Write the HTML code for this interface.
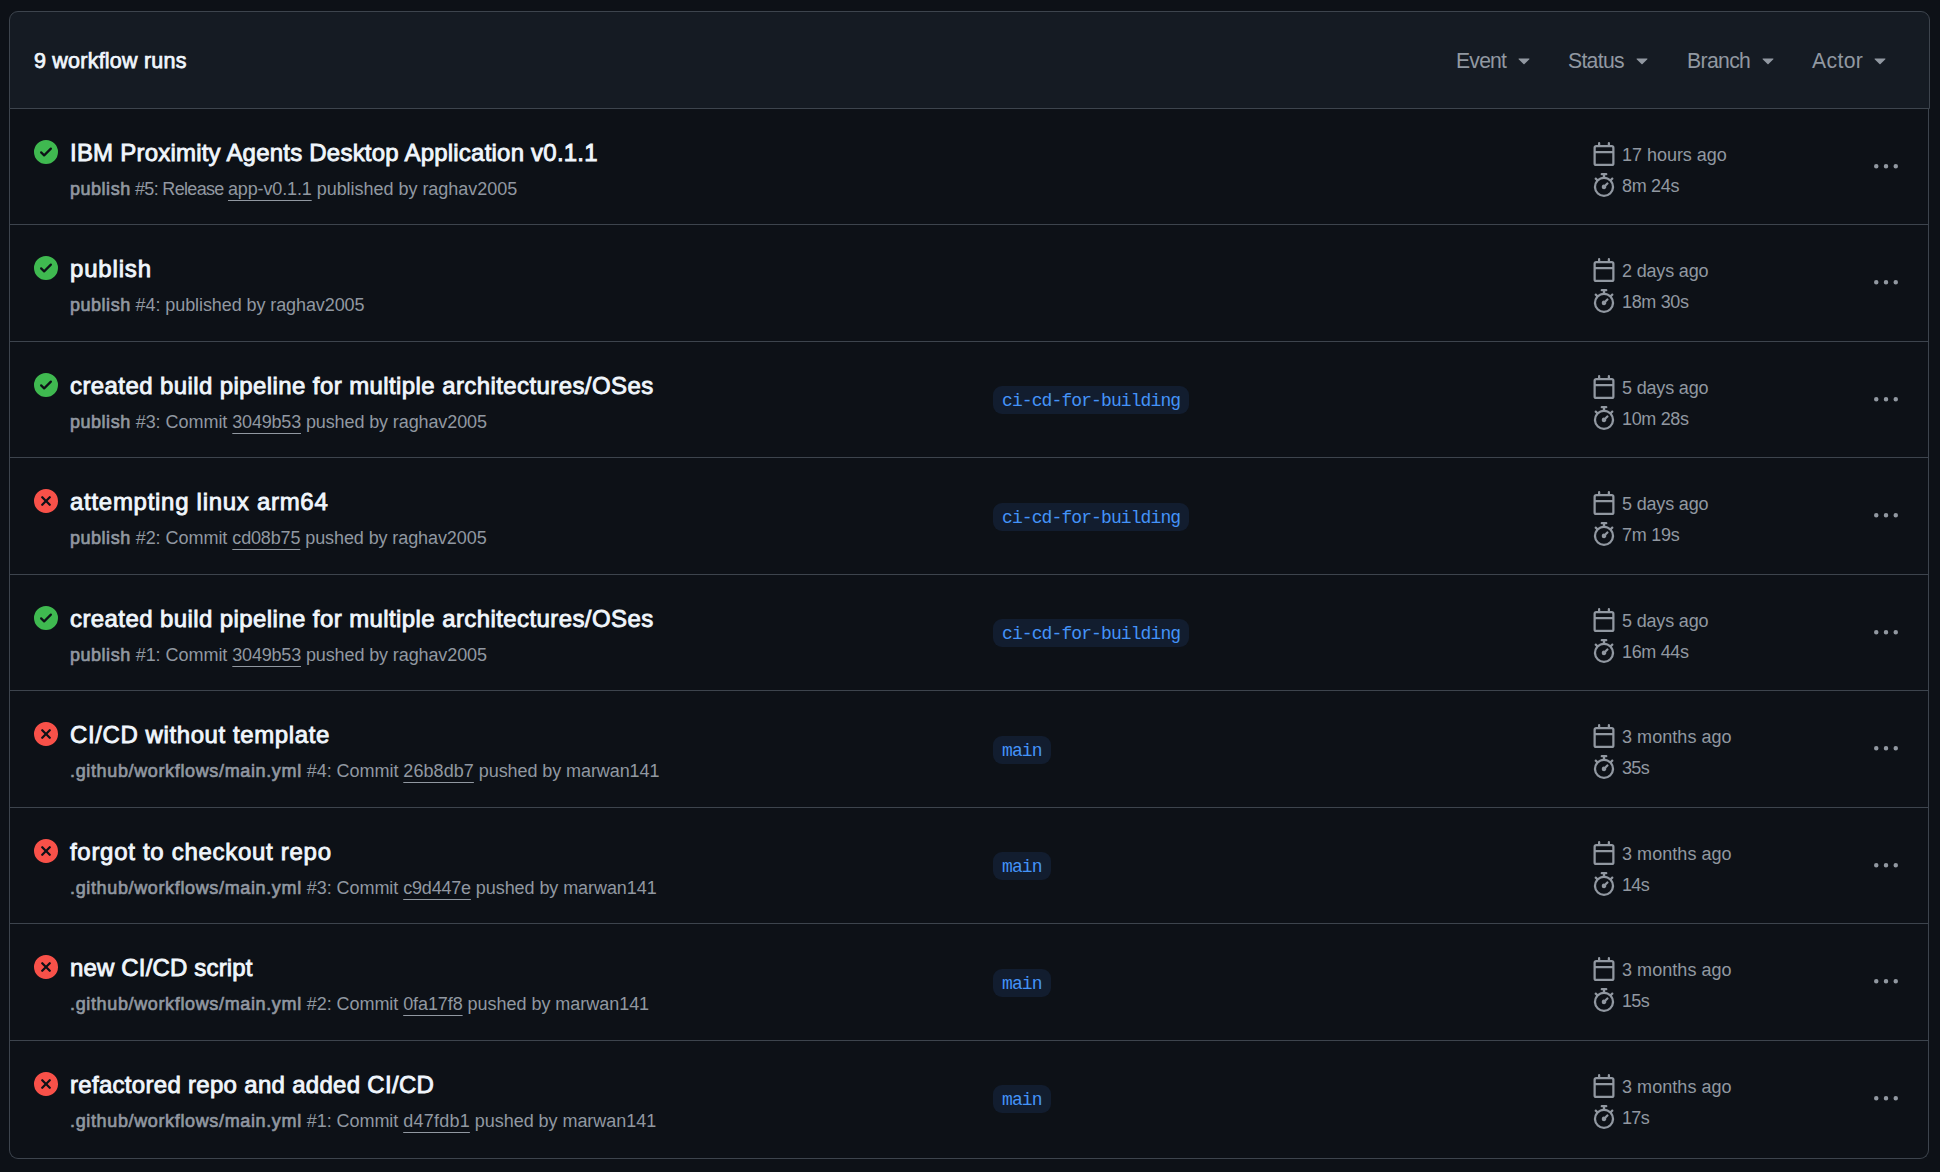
<!DOCTYPE html><html><head><meta charset="utf-8"><title>Workflow runs</title><style>html,body{margin:0;padding:0;background:#0d1117;width:1940px;height:1172px;overflow:hidden}
body{font-family:"Liberation Sans",sans-serif;position:relative}
.box{position:absolute;left:9px;top:108px;width:1920px;height:1051px;box-sizing:border-box;border:1px solid #3d444d;border-top:none;border-radius:0 0 9px 9px}
.hdr{position:absolute;left:9px;top:11px;width:1921px;height:98px;box-sizing:border-box;background:#151b23;border:1px solid #3d444d;border-radius:9px 9px 0 0;z-index:2}
.count{position:absolute;left:24px;top:39px;line-height:1;font-size:21.5px;font-weight:normal;-webkit-text-stroke:0.75px #f0f6fc;color:#f0f6fc;white-space:nowrap;letter-spacing:0.22px}
.flt{position:absolute;top:38px;font-size:21.2px;color:#9198a1;white-space:nowrap;line-height:1}
.cw{position:absolute;top:36px}
.row{position:absolute;left:10px;width:1918px;height:116px;border-top:1px solid #3d444d}
.st{position:absolute;left:24px;top:31px}
.title{position:absolute;left:60px;top:32.1px;font-size:24px;font-weight:normal;-webkit-text-stroke:0.85px #f0f6fc;color:#f0f6fc;white-space:nowrap;line-height:1}
.sub{position:absolute;left:60px;top:71px;font-size:18px;color:#9198a1;white-space:nowrap;line-height:1}
.sub u{text-decoration:underline;text-underline-offset:5px}
.lbl{position:absolute;left:983px;top:45px;height:28px;line-height:31px;padding:0 9px;border-radius:9px;background:#121d2f;color:#4493f8;font-family:"Liberation Mono",monospace;font-size:18px;letter-spacing:-0.9px;white-space:nowrap}
.cal{position:absolute;left:1582px;top:33px}
.sw{position:absolute;left:1582px;top:64px}
.when,.dur{position:absolute;left:1612px;font-size:18px;color:#9198a1;white-space:nowrap;line-height:1}
.when{top:37px}
.dur{top:68px}
.keb{position:absolute;left:1864px;top:46px}
.sub b{font-weight:normal;-webkit-text-stroke:0.65px #9198a1}
</style></head><body>
<div class="hdr"><span class="count">9 workflow runs</span>
<span class="flt" id="fEvent" style="left:1446px;letter-spacing:-0.800px">Event</span>
<span class="cw" style="left:1502px"><svg viewBox="0 0 16 16" width="24" height="24"><path fill="#9198a1" d="m4.427 7.427 3.396 3.396a.25.25 0 0 0 .354 0l3.396-3.396A.25.25 0 0 0 11.396 7H4.604a.25.25 0 0 0-.177.427Z"/></svg></span>
<span class="flt" id="fStatus" style="left:1558px;letter-spacing:-0.700px">Status</span>
<span class="cw" style="left:1620px"><svg viewBox="0 0 16 16" width="24" height="24"><path fill="#9198a1" d="m4.427 7.427 3.396 3.396a.25.25 0 0 0 .354 0l3.396-3.396A.25.25 0 0 0 11.396 7H4.604a.25.25 0 0 0-.177.427Z"/></svg></span>
<span class="flt" id="fBranch" style="left:1677px;letter-spacing:-0.650px">Branch</span>
<span class="cw" style="left:1746px"><svg viewBox="0 0 16 16" width="24" height="24"><path fill="#9198a1" d="m4.427 7.427 3.396 3.396a.25.25 0 0 0 .354 0l3.396-3.396A.25.25 0 0 0 11.396 7H4.604a.25.25 0 0 0-.177.427Z"/></svg></span>
<span class="flt" id="fActor" style="left:1802px;letter-spacing:0.350px">Actor</span>
<span class="cw" style="left:1858px"><svg viewBox="0 0 16 16" width="24" height="24"><path fill="#9198a1" d="m4.427 7.427 3.396 3.396a.25.25 0 0 0 .354 0l3.396-3.396A.25.25 0 0 0 11.396 7H4.604a.25.25 0 0 0-.177.427Z"/></svg></span>
</div>
<div class="box"></div>
<div class="row" style="top:108px">
<svg class="st" viewBox="0 0 16 16" width="24" height="24"><path fill="#3fb950" d="M8 16A8 8 0 1 1 8 0a8 8 0 0 1 0 16Zm3.78-9.72a.751.751 0 0 0-.018-1.042.751.751 0 0 0-1.042-.018L6.75 9.19 5.28 7.72a.751.751 0 0 0-1.042.018.751.751 0 0 0-.018 1.042l2 2a.75.75 0 0 0 1.06 0Z"/></svg>
<div class="title" id="t0" style="letter-spacing:0.217px">IBM Proximity Agents Desktop Application v0.1.1</div>
<div class="sub" id="s0"><b id="b0" style="letter-spacing:0.521px">publish</b><span id="p0" style="letter-spacing:-0.675px"> #5: Release </span><u id="u0" style="letter-spacing:-0.136px">app-v0.1.1</u><span id="q0" style="letter-spacing:-0.028px"> published by raghav2005</span></div>
<svg class="cal" viewBox="0 0 16 16" width="24" height="24"><path fill="#9198a1" d="M4.75 0a.75.75 0 0 1 .75.75V2h5V.75a.75.75 0 0 1 1.5 0V2h1.25c.966 0 1.75.784 1.75 1.75v10.5A1.75 1.75 0 0 1 13.25 16H2.75A1.75 1.75 0 0 1 1 14.25V3.75C1 2.784 1.784 2 2.75 2H4V.75A.75.75 0 0 1 4.75 0ZM2.5 7.5v6.75c0 .138.112.25.25.25h10.5a.25.25 0 0 0 .25-.25V7.5Zm10.750-4H2.75a.25.25 0 0 0-.25.25V6h11V3.75a.25.25 0 0 0-.25-.25Z"/></svg><span class="when" id="w0" style="letter-spacing:-0.029px">17 hours ago</span>
<svg class="sw" viewBox="0 0 16 16" width="24" height="24"><path fill="#9198a1" d="M5.75.75A.75.75 0 0 1 6.5 0h3a.75.75 0 0 1 0 1.5h-.75v1l-.001.041a6.724 6.724 0 0 1 3.464 1.435l.007-.006.75-.75a.749.749 0 0 1 1.275.326.749.749 0 0 1-.215.734l-.75.75-.006.007a6.75 6.75 0 1 1-10.548 0L2.72 5.03l-.75-.75a.751.751 0 0 1 .018-1.042.751.751 0 0 1 1.042-.018l.75.75.007.006A6.720 6.720 0 0 1 7.25 2.541V1.5H6.5a.75.75 0 0 1-.75-.75ZM8 14.5a5.250 5.250 0 1 0-.001-10.501A5.250 5.250 0 0 0 8 14.5Zm.389-6.700 1.330-1.330a.75.75 0 1 1 1.061 1.060L9.450 8.861A1.503 1.503 0 0 1 8 10.750a1.499 1.499 0 1 1 .389-2.950Z"/></svg><span class="dur" id="d0" style="letter-spacing:-0.300px">8m 24s</span>
<svg class="keb" viewBox="0 0 16 16" width="24" height="24"><path fill="#9198a1" d="M8 9a1.5 1.5 0 1 0 0-3 1.5 1.5 0 0 0 0 3ZM1.5 9a1.5 1.5 0 1 0 0-3 1.5 1.5 0 0 0 0 3Zm13 0a1.5 1.5 0 1 0 0-3 1.5 1.5 0 0 0 0 3Z"/></svg>
</div>
<div class="row" style="top:224px">
<svg class="st" viewBox="0 0 16 16" width="24" height="24"><path fill="#3fb950" d="M8 16A8 8 0 1 1 8 0a8 8 0 0 1 0 16Zm3.78-9.72a.751.751 0 0 0-.018-1.042.751.751 0 0 0-1.042-.018L6.75 9.19 5.28 7.72a.751.751 0 0 0-1.042.018.751.751 0 0 0-.018 1.042l2 2a.75.75 0 0 0 1.06 0Z"/></svg>
<div class="title" id="t1" style="letter-spacing:0.833px">publish</div>
<div class="sub" id="s1"><b id="b1" style="letter-spacing:0.521px">publish</b><span id="p1" style="letter-spacing:-0.087px"> #4: published by raghav2005</span></div>
<svg class="cal" viewBox="0 0 16 16" width="24" height="24"><path fill="#9198a1" d="M4.75 0a.75.75 0 0 1 .75.75V2h5V.75a.75.75 0 0 1 1.5 0V2h1.25c.966 0 1.75.784 1.75 1.75v10.5A1.75 1.75 0 0 1 13.25 16H2.75A1.75 1.75 0 0 1 1 14.25V3.75C1 2.784 1.784 2 2.75 2H4V.75A.75.75 0 0 1 4.75 0ZM2.5 7.5v6.75c0 .138.112.25.25.25h10.5a.25.25 0 0 0 .25-.25V7.5Zm10.750-4H2.75a.25.25 0 0 0-.25.25V6h11V3.75a.25.25 0 0 0-.25-.25Z"/></svg><span class="when" id="w1" style="letter-spacing:-0.173px">2 days ago</span>
<svg class="sw" viewBox="0 0 16 16" width="24" height="24"><path fill="#9198a1" d="M5.75.75A.75.75 0 0 1 6.5 0h3a.75.75 0 0 1 0 1.5h-.75v1l-.001.041a6.724 6.724 0 0 1 3.464 1.435l.007-.006.75-.75a.749.749 0 0 1 1.275.326.749.749 0 0 1-.215.734l-.75.75-.006.007a6.75 6.75 0 1 1-10.548 0L2.72 5.03l-.75-.75a.751.751 0 0 1 .018-1.042.751.751 0 0 1 1.042-.018l.75.75.007.006A6.720 6.720 0 0 1 7.25 2.541V1.5H6.5a.75.75 0 0 1-.75-.75ZM8 14.5a5.250 5.250 0 1 0-.001-10.501A5.250 5.250 0 0 0 8 14.5Zm.389-6.700 1.330-1.330a.75.75 0 1 1 1.061 1.060L9.450 8.861A1.503 1.503 0 0 1 8 10.750a1.499 1.499 0 1 1 .389-2.950Z"/></svg><span class="dur" id="d1" style="letter-spacing:-0.333px">18m 30s</span>
<svg class="keb" viewBox="0 0 16 16" width="24" height="24"><path fill="#9198a1" d="M8 9a1.5 1.5 0 1 0 0-3 1.5 1.5 0 0 0 0 3ZM1.5 9a1.5 1.5 0 1 0 0-3 1.5 1.5 0 0 0 0 3Zm13 0a1.5 1.5 0 1 0 0-3 1.5 1.5 0 0 0 0 3Z"/></svg>
</div>
<div class="row" style="top:341px">
<svg class="st" viewBox="0 0 16 16" width="24" height="24"><path fill="#3fb950" d="M8 16A8 8 0 1 1 8 0a8 8 0 0 1 0 16Zm3.78-9.72a.751.751 0 0 0-.018-1.042.751.751 0 0 0-1.042-.018L6.75 9.19 5.28 7.72a.751.751 0 0 0-1.042.018.751.751 0 0 0-.018 1.042l2 2a.75.75 0 0 0 1.06 0Z"/></svg>
<div class="title" id="t2" style="letter-spacing:0.406px">created build pipeline for multiple architectures/OSes</div>
<div class="sub" id="s2"><b id="b2" style="letter-spacing:0.521px">publish</b><span id="p2" style="letter-spacing:-0.036px"> #3: Commit </span><u id="u2" style="letter-spacing:-0.198px">3049b53</u><span id="q2" style="letter-spacing:-0.109px"> pushed by raghav2005</span></div>
<span class="lbl" style="top:44px">ci-cd-for-building</span>
<svg class="cal" viewBox="0 0 16 16" width="24" height="24"><path fill="#9198a1" d="M4.75 0a.75.75 0 0 1 .75.75V2h5V.75a.75.75 0 0 1 1.5 0V2h1.25c.966 0 1.75.784 1.75 1.75v10.5A1.75 1.75 0 0 1 13.25 16H2.75A1.75 1.75 0 0 1 1 14.25V3.75C1 2.784 1.784 2 2.75 2H4V.75A.75.75 0 0 1 4.75 0ZM2.5 7.5v6.75c0 .138.112.25.25.25h10.5a.25.25 0 0 0 .25-.25V7.5Zm10.750-4H2.75a.25.25 0 0 0-.25.25V6h11V3.75a.25.25 0 0 0-.25-.25Z"/></svg><span class="when" id="w2" style="letter-spacing:-0.173px">5 days ago</span>
<svg class="sw" viewBox="0 0 16 16" width="24" height="24"><path fill="#9198a1" d="M5.75.75A.75.75 0 0 1 6.5 0h3a.75.75 0 0 1 0 1.5h-.75v1l-.001.041a6.724 6.724 0 0 1 3.464 1.435l.007-.006.75-.75a.749.749 0 0 1 1.275.326.749.749 0 0 1-.215.734l-.75.75-.006.007a6.75 6.75 0 1 1-10.548 0L2.72 5.03l-.75-.75a.751.751 0 0 1 .018-1.042.751.751 0 0 1 1.042-.018l.75.75.007.006A6.720 6.720 0 0 1 7.25 2.541V1.5H6.5a.75.75 0 0 1-.75-.75ZM8 14.5a5.250 5.250 0 1 0-.001-10.501A5.250 5.250 0 0 0 8 14.5Zm.389-6.700 1.330-1.330a.75.75 0 1 1 1.061 1.060L9.450 8.861A1.503 1.503 0 0 1 8 10.750a1.499 1.499 0 1 1 .389-2.950Z"/></svg><span class="dur" id="d2" style="letter-spacing:-0.333px">10m 28s</span>
<svg class="keb" viewBox="0 0 16 16" width="24" height="24"><path fill="#9198a1" d="M8 9a1.5 1.5 0 1 0 0-3 1.5 1.5 0 0 0 0 3ZM1.5 9a1.5 1.5 0 1 0 0-3 1.5 1.5 0 0 0 0 3Zm13 0a1.5 1.5 0 1 0 0-3 1.5 1.5 0 0 0 0 3Z"/></svg>
</div>
<div class="row" style="top:457px">
<svg class="st" viewBox="0 0 16 16" width="24" height="24"><path fill="#f85149" d="M2.343 13.657A8 8 0 1 1 13.658 2.343 8 8 0 0 1 2.343 13.657ZM6.03 4.97a.751.751 0 0 0-1.042.018.751.751 0 0 0-.018 1.042L6.94 8 4.970 9.970a.749.749 0 0 0 .326 1.275.749.749 0 0 0 .734-.215L8 9.06l1.97 1.97a.749.749 0 0 0 1.275-.326.749.749 0 0 0-.215-.734L9.06 8l1.97-1.97a.749.749 0 0 0-.326-1.275.749.749 0 0 0-.734.215L8 6.94Z"/></svg>
<div class="title" id="t3" style="letter-spacing:0.714px">attempting linux arm64</div>
<div class="sub" id="s3"><b id="b3" style="letter-spacing:0.521px">publish</b><span id="p3" style="letter-spacing:-0.036px"> #2: Commit </span><u id="u3" style="letter-spacing:-0.154px">cd08b75</u><span id="q3" style="letter-spacing:-0.090px"> pushed by raghav2005</span></div>
<span class="lbl" style="top:45px">ci-cd-for-building</span>
<svg class="cal" viewBox="0 0 16 16" width="24" height="24"><path fill="#9198a1" d="M4.75 0a.75.75 0 0 1 .75.75V2h5V.75a.75.75 0 0 1 1.5 0V2h1.25c.966 0 1.75.784 1.75 1.75v10.5A1.75 1.75 0 0 1 13.25 16H2.75A1.75 1.75 0 0 1 1 14.25V3.75C1 2.784 1.784 2 2.75 2H4V.75A.75.75 0 0 1 4.75 0ZM2.5 7.5v6.75c0 .138.112.25.25.25h10.5a.25.25 0 0 0 .25-.25V7.5Zm10.750-4H2.75a.25.25 0 0 0-.25.25V6h11V3.75a.25.25 0 0 0-.25-.25Z"/></svg><span class="when" id="w3" style="letter-spacing:-0.173px">5 days ago</span>
<svg class="sw" viewBox="0 0 16 16" width="24" height="24"><path fill="#9198a1" d="M5.75.75A.75.75 0 0 1 6.5 0h3a.75.75 0 0 1 0 1.5h-.75v1l-.001.041a6.724 6.724 0 0 1 3.464 1.435l.007-.006.75-.75a.749.749 0 0 1 1.275.326.749.749 0 0 1-.215.734l-.75.75-.006.007a6.75 6.75 0 1 1-10.548 0L2.72 5.03l-.75-.75a.751.751 0 0 1 .018-1.042.751.751 0 0 1 1.042-.018l.75.75.007.006A6.720 6.720 0 0 1 7.25 2.541V1.5H6.5a.75.75 0 0 1-.75-.75ZM8 14.5a5.250 5.250 0 1 0-.001-10.501A5.250 5.250 0 0 0 8 14.5Zm.389-6.700 1.330-1.330a.75.75 0 1 1 1.061 1.060L9.450 8.861A1.503 1.503 0 0 1 8 10.750a1.499 1.499 0 1 1 .389-2.950Z"/></svg><span class="dur" id="d3" style="letter-spacing:-0.236px">7m 19s</span>
<svg class="keb" viewBox="0 0 16 16" width="24" height="24"><path fill="#9198a1" d="M8 9a1.5 1.5 0 1 0 0-3 1.5 1.5 0 0 0 0 3ZM1.5 9a1.5 1.5 0 1 0 0-3 1.5 1.5 0 0 0 0 3Zm13 0a1.5 1.5 0 1 0 0-3 1.5 1.5 0 0 0 0 3Z"/></svg>
</div>
<div class="row" style="top:574px">
<svg class="st" viewBox="0 0 16 16" width="24" height="24"><path fill="#3fb950" d="M8 16A8 8 0 1 1 8 0a8 8 0 0 1 0 16Zm3.78-9.72a.751.751 0 0 0-.018-1.042.751.751 0 0 0-1.042-.018L6.75 9.19 5.28 7.72a.751.751 0 0 0-1.042.018.751.751 0 0 0-.018 1.042l2 2a.75.75 0 0 0 1.06 0Z"/></svg>
<div class="title" id="t4" style="letter-spacing:0.406px">created build pipeline for multiple architectures/OSes</div>
<div class="sub" id="s4"><b id="b4" style="letter-spacing:0.521px">publish</b><span id="p4" style="letter-spacing:-0.036px"> #1: Commit </span><u id="u4" style="letter-spacing:-0.198px">3049b53</u><span id="q4" style="letter-spacing:-0.109px"> pushed by raghav2005</span></div>
<span class="lbl" style="top:44px">ci-cd-for-building</span>
<svg class="cal" viewBox="0 0 16 16" width="24" height="24"><path fill="#9198a1" d="M4.75 0a.75.75 0 0 1 .75.75V2h5V.75a.75.75 0 0 1 1.5 0V2h1.25c.966 0 1.75.784 1.75 1.75v10.5A1.75 1.75 0 0 1 13.25 16H2.75A1.75 1.75 0 0 1 1 14.25V3.75C1 2.784 1.784 2 2.75 2H4V.75A.75.75 0 0 1 4.75 0ZM2.5 7.5v6.75c0 .138.112.25.25.25h10.5a.25.25 0 0 0 .25-.25V7.5Zm10.750-4H2.75a.25.25 0 0 0-.25.25V6h11V3.75a.25.25 0 0 0-.25-.25Z"/></svg><span class="when" id="w4" style="letter-spacing:-0.173px">5 days ago</span>
<svg class="sw" viewBox="0 0 16 16" width="24" height="24"><path fill="#9198a1" d="M5.75.75A.75.75 0 0 1 6.5 0h3a.75.75 0 0 1 0 1.5h-.75v1l-.001.041a6.724 6.724 0 0 1 3.464 1.435l.007-.006.75-.75a.749.749 0 0 1 1.275.326.749.749 0 0 1-.215.734l-.75.75-.006.007a6.75 6.75 0 1 1-10.548 0L2.72 5.03l-.75-.75a.751.751 0 0 1 .018-1.042.751.751 0 0 1 1.042-.018l.75.75.007.006A6.720 6.720 0 0 1 7.25 2.541V1.5H6.5a.75.75 0 0 1-.75-.75ZM8 14.5a5.250 5.250 0 1 0-.001-10.501A5.250 5.250 0 0 0 8 14.5Zm.389-6.700 1.330-1.330a.75.75 0 1 1 1.061 1.060L9.450 8.861A1.503 1.503 0 0 1 8 10.750a1.499 1.499 0 1 1 .389-2.950Z"/></svg><span class="dur" id="d4" style="letter-spacing:-0.333px">16m 44s</span>
<svg class="keb" viewBox="0 0 16 16" width="24" height="24"><path fill="#9198a1" d="M8 9a1.5 1.5 0 1 0 0-3 1.5 1.5 0 0 0 0 3ZM1.5 9a1.5 1.5 0 1 0 0-3 1.5 1.5 0 0 0 0 3Zm13 0a1.5 1.5 0 1 0 0-3 1.5 1.5 0 0 0 0 3Z"/></svg>
</div>
<div class="row" style="top:690px">
<svg class="st" viewBox="0 0 16 16" width="24" height="24"><path fill="#f85149" d="M2.343 13.657A8 8 0 1 1 13.658 2.343 8 8 0 0 1 2.343 13.657ZM6.03 4.97a.751.751 0 0 0-1.042.018.751.751 0 0 0-.018 1.042L6.94 8 4.970 9.970a.749.749 0 0 0 .326 1.275.749.749 0 0 0 .734-.215L8 9.06l1.97 1.97a.749.749 0 0 0 1.275-.326.749.749 0 0 0-.215-.734L9.06 8l1.97-1.97a.749.749 0 0 0-.326-1.275.749.749 0 0 0-.734.215L8 6.94Z"/></svg>
<div class="title" id="t5" style="letter-spacing:0.595px">CI/CD without template</div>
<div class="sub" id="s5"><b id="b5" style="letter-spacing:0.643px">.github/workflows/main.yml</b><span id="p5" style="letter-spacing:-0.044px"> #4: Commit </span><u id="u5" style="letter-spacing:0.074px">26b8db7</u><span id="q5" style="letter-spacing:-0.082px"> pushed by marwan141</span></div>
<span class="lbl" style="top:45px">main</span>
<svg class="cal" viewBox="0 0 16 16" width="24" height="24"><path fill="#9198a1" d="M4.75 0a.75.75 0 0 1 .75.75V2h5V.75a.75.75 0 0 1 1.5 0V2h1.25c.966 0 1.75.784 1.75 1.75v10.5A1.75 1.75 0 0 1 13.25 16H2.75A1.75 1.75 0 0 1 1 14.25V3.75C1 2.784 1.784 2 2.75 2H4V.75A.75.75 0 0 1 4.75 0ZM2.5 7.5v6.75c0 .138.112.25.25.25h10.5a.25.25 0 0 0 .25-.25V7.5Zm10.750-4H2.75a.25.25 0 0 0-.25.25V6h11V3.75a.25.25 0 0 0-.25-.25Z"/></svg><span class="when" id="w5" style="letter-spacing:0.051px">3 months ago</span>
<svg class="sw" viewBox="0 0 16 16" width="24" height="24"><path fill="#9198a1" d="M5.75.75A.75.75 0 0 1 6.5 0h3a.75.75 0 0 1 0 1.5h-.75v1l-.001.041a6.724 6.724 0 0 1 3.464 1.435l.007-.006.75-.75a.749.749 0 0 1 1.275.326.749.749 0 0 1-.215.734l-.75.75-.006.007a6.75 6.75 0 1 1-10.548 0L2.72 5.03l-.75-.75a.751.751 0 0 1 .018-1.042.751.751 0 0 1 1.042-.018l.75.75.007.006A6.720 6.720 0 0 1 7.25 2.541V1.5H6.5a.75.75 0 0 1-.75-.75ZM8 14.5a5.250 5.250 0 1 0-.001-10.501A5.250 5.250 0 0 0 8 14.5Zm.389-6.700 1.330-1.330a.75.75 0 1 1 1.061 1.060L9.450 8.861A1.503 1.503 0 0 1 8 10.750a1.499 1.499 0 1 1 .389-2.950Z"/></svg><span class="dur" id="d5" style="letter-spacing:-0.690px">35s</span>
<svg class="keb" viewBox="0 0 16 16" width="24" height="24"><path fill="#9198a1" d="M8 9a1.5 1.5 0 1 0 0-3 1.5 1.5 0 0 0 0 3ZM1.5 9a1.5 1.5 0 1 0 0-3 1.5 1.5 0 0 0 0 3Zm13 0a1.5 1.5 0 1 0 0-3 1.5 1.5 0 0 0 0 3Z"/></svg>
</div>
<div class="row" style="top:807px">
<svg class="st" viewBox="0 0 16 16" width="24" height="24"><path fill="#f85149" d="M2.343 13.657A8 8 0 1 1 13.658 2.343 8 8 0 0 1 2.343 13.657ZM6.03 4.97a.751.751 0 0 0-1.042.018.751.751 0 0 0-.018 1.042L6.94 8 4.970 9.970a.749.749 0 0 0 .326 1.275.749.749 0 0 0 .734-.215L8 9.06l1.97 1.97a.749.749 0 0 0 1.275-.326.749.749 0 0 0-.215-.734L9.06 8l1.97-1.97a.749.749 0 0 0-.326-1.275.749.749 0 0 0-.734.215L8 6.94Z"/></svg>
<div class="title" id="t6" style="letter-spacing:0.705px">forgot to checkout repo</div>
<div class="sub" id="s6"><b id="b6" style="letter-spacing:0.643px">.github/workflows/main.yml</b><span id="p6" style="letter-spacing:-0.052px"> #3: Commit </span><u id="u6" style="letter-spacing:-0.196px">c9d447e</u><span id="q6" style="letter-spacing:-0.071px"> pushed by marwan141</span></div>
<span class="lbl" style="top:44px">main</span>
<svg class="cal" viewBox="0 0 16 16" width="24" height="24"><path fill="#9198a1" d="M4.75 0a.75.75 0 0 1 .75.75V2h5V.75a.75.75 0 0 1 1.5 0V2h1.25c.966 0 1.75.784 1.75 1.75v10.5A1.75 1.75 0 0 1 13.25 16H2.75A1.75 1.75 0 0 1 1 14.25V3.75C1 2.784 1.784 2 2.75 2H4V.75A.75.75 0 0 1 4.75 0ZM2.5 7.5v6.75c0 .138.112.25.25.25h10.5a.25.25 0 0 0 .25-.25V7.5Zm10.750-4H2.75a.25.25 0 0 0-.25.25V6h11V3.75a.25.25 0 0 0-.25-.25Z"/></svg><span class="when" id="w6" style="letter-spacing:0.051px">3 months ago</span>
<svg class="sw" viewBox="0 0 16 16" width="24" height="24"><path fill="#9198a1" d="M5.75.75A.75.75 0 0 1 6.5 0h3a.75.75 0 0 1 0 1.5h-.75v1l-.001.041a6.724 6.724 0 0 1 3.464 1.435l.007-.006.75-.75a.749.749 0 0 1 1.275.326.749.749 0 0 1-.215.734l-.75.75-.006.007a6.75 6.75 0 1 1-10.548 0L2.72 5.03l-.75-.75a.751.751 0 0 1 .018-1.042.751.751 0 0 1 1.042-.018l.75.75.007.006A6.720 6.720 0 0 1 7.25 2.541V1.5H6.5a.75.75 0 0 1-.75-.75ZM8 14.5a5.250 5.250 0 1 0-.001-10.501A5.250 5.250 0 0 0 8 14.5Zm.389-6.700 1.330-1.330a.75.75 0 1 1 1.061 1.060L9.450 8.861A1.503 1.503 0 0 1 8 10.750a1.499 1.499 0 1 1 .389-2.950Z"/></svg><span class="dur" id="d6" style="letter-spacing:-0.690px">14s</span>
<svg class="keb" viewBox="0 0 16 16" width="24" height="24"><path fill="#9198a1" d="M8 9a1.5 1.5 0 1 0 0-3 1.5 1.5 0 0 0 0 3ZM1.5 9a1.5 1.5 0 1 0 0-3 1.5 1.5 0 0 0 0 3Zm13 0a1.5 1.5 0 1 0 0-3 1.5 1.5 0 0 0 0 3Z"/></svg>
</div>
<div class="row" style="top:923px">
<svg class="st" viewBox="0 0 16 16" width="24" height="24"><path fill="#f85149" d="M2.343 13.657A8 8 0 1 1 13.658 2.343 8 8 0 0 1 2.343 13.657ZM6.03 4.97a.751.751 0 0 0-1.042.018.751.751 0 0 0-.018 1.042L6.94 8 4.970 9.970a.749.749 0 0 0 .326 1.275.749.749 0 0 0 .734-.215L8 9.06l1.97 1.97a.749.749 0 0 0 1.275-.326.749.749 0 0 0-.215-.734L9.06 8l1.97-1.97a.749.749 0 0 0-.326-1.275.749.749 0 0 0-.734.215L8 6.94Z"/></svg>
<div class="title" id="t7" style="letter-spacing:0.167px">new CI/CD script</div>
<div class="sub" id="s7"><b id="b7" style="letter-spacing:0.643px">.github/workflows/main.yml</b><span id="p7" style="letter-spacing:-0.052px"> #2: Commit </span><u id="u7" style="letter-spacing:-0.095px">0fa17f8</u><span id="q7" style="letter-spacing:-0.032px"> pushed by marwan141</span></div>
<span class="lbl" style="top:45px">main</span>
<svg class="cal" viewBox="0 0 16 16" width="24" height="24"><path fill="#9198a1" d="M4.75 0a.75.75 0 0 1 .75.75V2h5V.75a.75.75 0 0 1 1.5 0V2h1.25c.966 0 1.75.784 1.75 1.75v10.5A1.75 1.75 0 0 1 13.25 16H2.75A1.75 1.75 0 0 1 1 14.25V3.75C1 2.784 1.784 2 2.75 2H4V.75A.75.75 0 0 1 4.75 0ZM2.5 7.5v6.75c0 .138.112.25.25.25h10.5a.25.25 0 0 0 .25-.25V7.5Zm10.750-4H2.75a.25.25 0 0 0-.25.25V6h11V3.75a.25.25 0 0 0-.25-.25Z"/></svg><span class="when" id="w7" style="letter-spacing:0.051px">3 months ago</span>
<svg class="sw" viewBox="0 0 16 16" width="24" height="24"><path fill="#9198a1" d="M5.75.75A.75.75 0 0 1 6.5 0h3a.75.75 0 0 1 0 1.5h-.75v1l-.001.041a6.724 6.724 0 0 1 3.464 1.435l.007-.006.75-.75a.749.749 0 0 1 1.275.326.749.749 0 0 1-.215.734l-.75.75-.006.007a6.75 6.75 0 1 1-10.548 0L2.72 5.03l-.75-.75a.751.751 0 0 1 .018-1.042.751.751 0 0 1 1.042-.018l.75.75.007.006A6.720 6.720 0 0 1 7.25 2.541V1.5H6.5a.75.75 0 0 1-.75-.75ZM8 14.5a5.250 5.250 0 1 0-.001-10.501A5.250 5.250 0 0 0 8 14.5Zm.389-6.700 1.330-1.330a.75.75 0 1 1 1.061 1.060L9.450 8.861A1.503 1.503 0 0 1 8 10.750a1.499 1.499 0 1 1 .389-2.950Z"/></svg><span class="dur" id="d7" style="letter-spacing:-0.690px">15s</span>
<svg class="keb" viewBox="0 0 16 16" width="24" height="24"><path fill="#9198a1" d="M8 9a1.5 1.5 0 1 0 0-3 1.5 1.5 0 0 0 0 3ZM1.5 9a1.5 1.5 0 1 0 0-3 1.5 1.5 0 0 0 0 3Zm13 0a1.5 1.5 0 1 0 0-3 1.5 1.5 0 0 0 0 3Z"/></svg>
</div>
<div class="row" style="top:1040px">
<svg class="st" viewBox="0 0 16 16" width="24" height="24"><path fill="#f85149" d="M2.343 13.657A8 8 0 1 1 13.658 2.343 8 8 0 0 1 2.343 13.657ZM6.03 4.97a.751.751 0 0 0-1.042.018.751.751 0 0 0-.018 1.042L6.94 8 4.970 9.970a.749.749 0 0 0 .326 1.275.749.749 0 0 0 .734-.215L8 9.06l1.97 1.97a.749.749 0 0 0 1.275-.326.749.749 0 0 0-.215-.734L9.06 8l1.97-1.97a.749.749 0 0 0-.326-1.275.749.749 0 0 0-.734.215L8 6.94Z"/></svg>
<div class="title" id="t8" style="letter-spacing:0.300px">refactored repo and added CI/CD</div>
<div class="sub" id="s8"><b id="b8" style="letter-spacing:0.643px">.github/workflows/main.yml</b><span id="p8" style="letter-spacing:-0.053px"> #1: Commit </span><u id="u8" style="letter-spacing:0.233px">d47fdb1</u><span id="q8" style="letter-spacing:-0.046px"> pushed by marwan141</span></div>
<span class="lbl" style="top:44px">main</span>
<svg class="cal" viewBox="0 0 16 16" width="24" height="24"><path fill="#9198a1" d="M4.75 0a.75.75 0 0 1 .75.75V2h5V.75a.75.75 0 0 1 1.5 0V2h1.25c.966 0 1.75.784 1.75 1.75v10.5A1.75 1.75 0 0 1 13.25 16H2.75A1.75 1.75 0 0 1 1 14.25V3.75C1 2.784 1.784 2 2.75 2H4V.75A.75.75 0 0 1 4.75 0ZM2.5 7.5v6.75c0 .138.112.25.25.25h10.5a.25.25 0 0 0 .25-.25V7.5Zm10.750-4H2.75a.25.25 0 0 0-.25.25V6h11V3.75a.25.25 0 0 0-.25-.25Z"/></svg><span class="when" id="w8" style="letter-spacing:0.051px">3 months ago</span>
<svg class="sw" viewBox="0 0 16 16" width="24" height="24"><path fill="#9198a1" d="M5.75.75A.75.75 0 0 1 6.5 0h3a.75.75 0 0 1 0 1.5h-.75v1l-.001.041a6.724 6.724 0 0 1 3.464 1.435l.007-.006.75-.75a.749.749 0 0 1 1.275.326.749.749 0 0 1-.215.734l-.75.75-.006.007a6.75 6.75 0 1 1-10.548 0L2.72 5.03l-.75-.75a.751.751 0 0 1 .018-1.042.751.751 0 0 1 1.042-.018l.75.75.007.006A6.720 6.720 0 0 1 7.25 2.541V1.5H6.5a.75.75 0 0 1-.75-.75ZM8 14.5a5.250 5.250 0 1 0-.001-10.501A5.250 5.250 0 0 0 8 14.5Zm.389-6.700 1.330-1.330a.75.75 0 1 1 1.061 1.060L9.450 8.861A1.503 1.503 0 0 1 8 10.750a1.499 1.499 0 1 1 .389-2.950Z"/></svg><span class="dur" id="d8" style="letter-spacing:-0.690px">17s</span>
<svg class="keb" viewBox="0 0 16 16" width="24" height="24"><path fill="#9198a1" d="M8 9a1.5 1.5 0 1 0 0-3 1.5 1.5 0 0 0 0 3ZM1.5 9a1.5 1.5 0 1 0 0-3 1.5 1.5 0 0 0 0 3Zm13 0a1.5 1.5 0 1 0 0-3 1.5 1.5 0 0 0 0 3Z"/></svg>
</div>
</body></html>
